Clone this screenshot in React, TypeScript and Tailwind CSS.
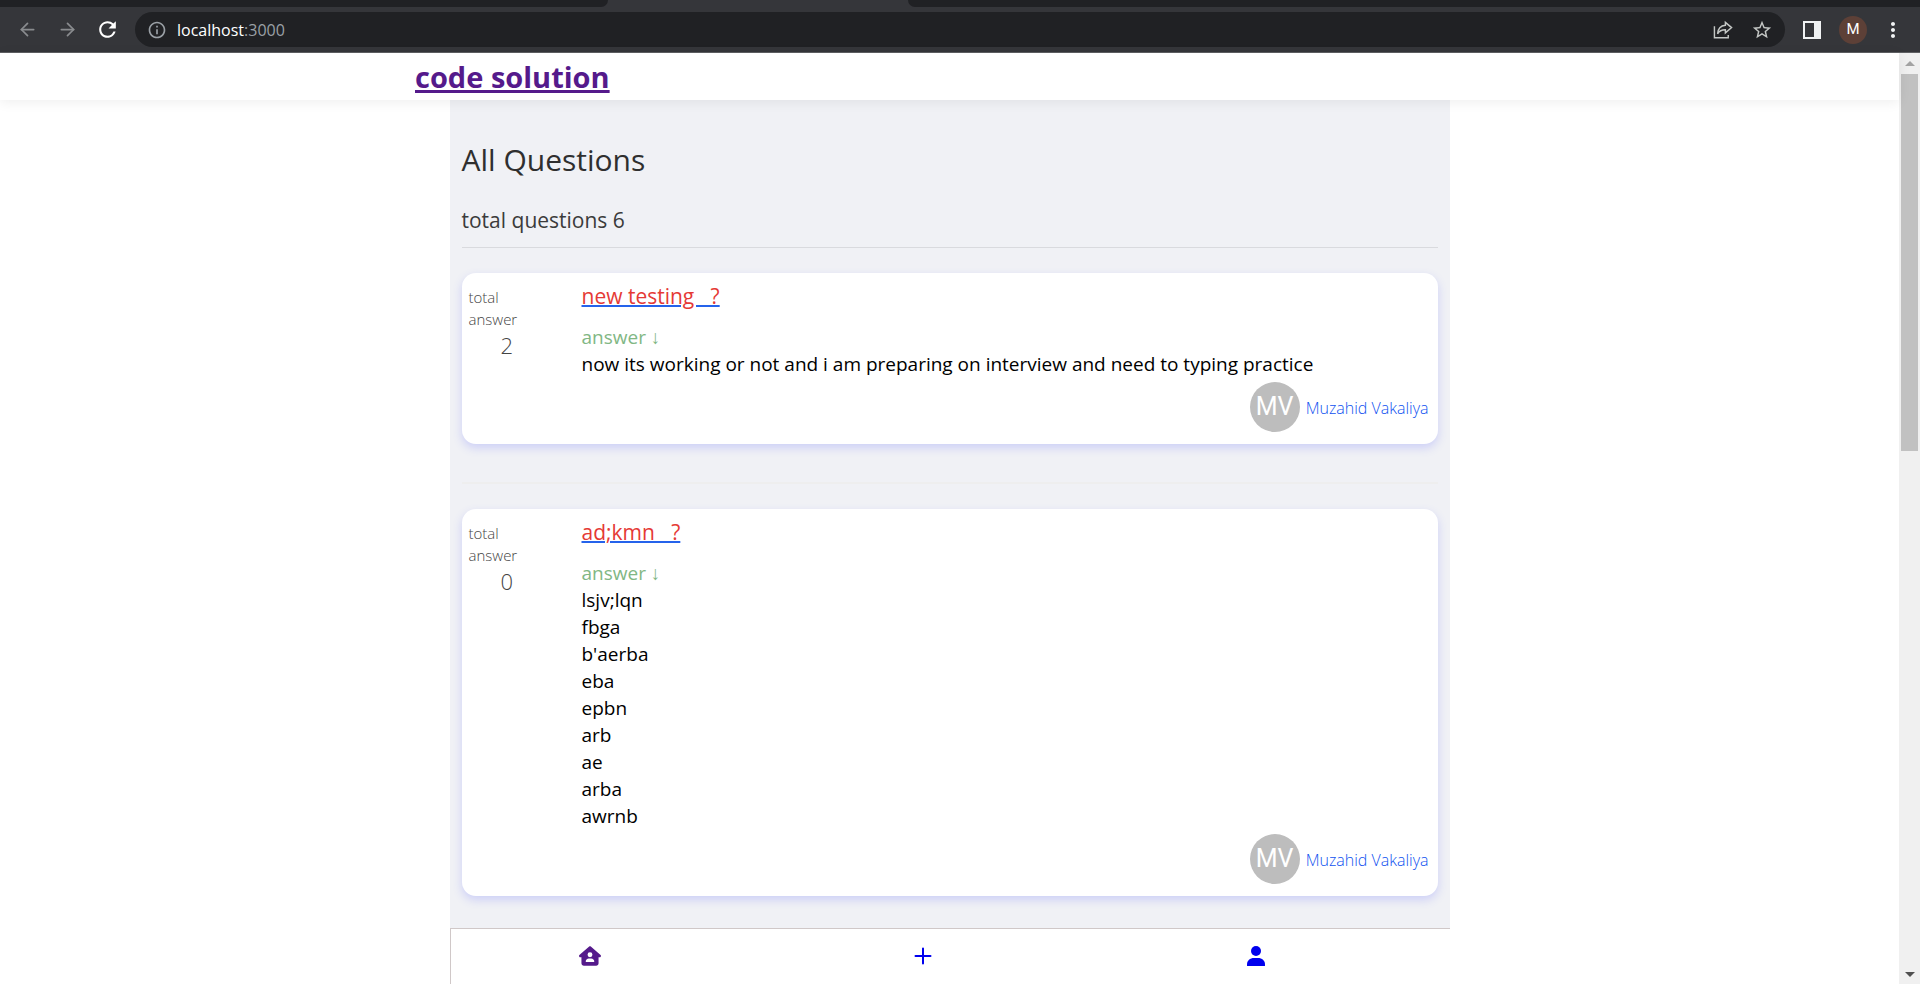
import { ArrowLeft, ArrowRight } from 'lucide-react';
import { MdRefresh, MdInfoOutline, MdStarOutline, MdMoreVert } from 'react-icons/md';
import { FaHouseUser } from 'react-icons/fa6';

type Question = { id: number; title: string; total: number; answer: string[]; author: string; initials: string };

const questions: Question[] = [
  {
    id: 1,
    title: 'new testing',
    total: 2,
    answer: ['now its working or not and i am preparing on interview and need to typing practice'],
    author: 'Muzahid Vakaliya',
    initials: 'MV',
  },
  {
    id: 2,
    title: 'ad;kmn',
    total: 0,
    answer: ['lsjv;lqn', 'fbga', "b'aerba", 'eba', 'epbn', 'arb', 'ae', 'arba', 'awrnb'],
    author: 'Muzahid Vakaliya',
    initials: 'MV',
  },
];

function BrowserBar() {
  return (
    <div className="shrink-0 border-b border-[#5f6063] bg-[#35363a]">
      <div className="flex h-[7px]">
        <div className="w-[608px] rounded-br-lg bg-[#202124]" />
        <div className="w-[300px]" />
        <div className="flex-1 rounded-bl-lg bg-[#202124]" />
      </div>
      <div className="flex h-[45px] items-center pl-[17px] pr-[15px]">
        <button aria-label="Back" className="text-[#898b8e]"><ArrowLeft size={21} strokeWidth={2} /></button>
        <button aria-label="Forward" className="ml-[19px] text-[#898b8e]"><ArrowRight size={21} strokeWidth={2} /></button>
        <button aria-label="Reload" className="ml-[17px] text-white"><MdRefresh size={25} /></button>
        <div className="ml-[15px] flex h-[35px] flex-1 items-center rounded-full bg-[#202124] pl-3 pr-3">
          <MdInfoOutline size={20} className="text-[#9aa0a6]" />
          <div className="ml-[10px] flex-1 text-[16px] leading-6 text-[#9aa0a6]"><span className="text-white">localhost</span>:3000</div>
          <button aria-label="Share" className="text-[#c4c7c5]">
            <svg width="20" height="20" viewBox="0 0 21 20" fill="none" stroke="currentColor" strokeWidth="1.5">
              <path d="M1.500 6v12.200h14.500v-3" />
              <path d="M13 2l6.500 5.500L13 13V9.800C9 9.800 6.500 11 4.800 14 5.200 8.500 8 5.500 13 5z" />
            </svg>
          </button>
          <button aria-label="Bookmark" className="ml-[18px] text-[#c4c7c5]"><MdStarOutline size={22} /></button>
        </div>
        <button aria-label="Side panel" className="ml-[18px] h-[18px] w-[18px] border-2 border-r-[7px] border-[#f1f3f4]" />
        <button aria-label="Profile" className="ml-[18px] flex size-7 items-center justify-center rounded-full bg-[#5d4037] font-['Roboto',sans-serif] text-[15px] text-white">M</button>
        <button aria-label="Menu" className="ml-[14px] text-[#f1f3f4]"><MdMoreVert size={24} /></button>
      </div>
    </div>
  );
}

function QuestionCard({ q }: { q: Question }) {
  return (
    <article className="flex rounded-[14px] bg-white px-[7px] pb-3 pt-2 shadow-[0_4px_10px_rgba(80,90,255,0.22)]">
      <div className="w-[113px] shrink-0 pt-[5px] text-[#444]">
        <p className="w-14 text-[15px] font-light leading-[22px]">total answer</p>
        <p className="pl-8 text-[22px] font-light leading-[30px]">{q.total}</p>
      </div>
      <div className="min-w-0 flex-1">
        <h2 className="text-[21px] leading-[30px]">
          <a href="#question" className="whitespace-pre text-[#e53935] underline decoration-[#2563eb] decoration-2">{q.title + '   ?'}</a>
        </h2>
        <p className="mt-[13px] text-[19px] leading-[27px] text-[#81b784]">answer ↓</p>
        {q.answer.map((line) => (
          <p key={line} className="text-[19px] leading-[27px] text-black">{line}</p>
        ))}
        <div className="flex items-center justify-end gap-[6px] pr-[2px] pt-1">
          <span className="flex size-[50px] items-center justify-center rounded-full bg-[#bdbdbd] font-['Roboto',sans-serif] text-[25px] text-white">{q.initials}</span>
          <a href="#author" className="pt-[2px] text-[16px] font-light text-[#0f52f0]">{q.author}</a>
        </div>
      </div>
    </article>
  );
}

function Scrollbar() {
  return (
    <div aria-hidden="true" className="flex w-[21px] shrink-0 flex-col items-center justify-between bg-[#f0f0f0] pb-[7px]">
      <div className="flex h-full w-full flex-col items-center">
        <div className="flex h-[21px] items-center"><div className="border-x-[5px] border-b-[5px] border-x-transparent border-b-[#a3a3a3]" /></div>
        <div className="h-[41%] w-[17px] bg-[#c1c1c1]" />
      </div>
      <div className="border-x-[5px] border-t-[5px] border-x-transparent border-t-[#505050]" />
    </div>
  );
}

export default function App() {
  return (
    <div className="flex h-screen flex-col overflow-hidden bg-white font-['Open_Sans',sans-serif]">
      <BrowserBar />
      <div className="flex min-h-0 flex-1">
        <div className="flex min-w-0 flex-1 flex-col">
          <header className="z-10 h-[47px] shrink-0 bg-white pl-[415px] shadow-[0_2px_12px_rgba(0,0,0,0.07)]">
            <a href="#home" className="text-[29px] font-bold leading-[48px] text-[#551a8b] underline decoration-[3px]">code solution</a>
          </header>
          <main className="mx-auto min-h-0 w-full max-w-[1000px] flex-1 overflow-hidden bg-[#f0f1f5] px-3 pt-9">
            <h1 className="text-[30px] leading-[48px] text-[#2f2f2f]">All Questions</h1>
            <p className="mt-[20px] text-[21px] leading-[32px] text-[#3b3b3b]">total questions 6</p>
            <hr className="mt-[11px] border-[#d9dade]" />
            <div className="mt-[25px]">
              {questions.map((q, i) => (
                <div key={q.id}>
                  {i > 0 && <hr className="mb-[25px] mt-[38px] border-t-2 border-[#eeeeee]" />}
                  <QuestionCard q={q} />
                </div>
              ))}
            </div>
          </main>
          <nav className="mx-auto grid h-14 w-full max-w-[1000px] shrink-0 grid-cols-3 border-l border-t border-[#d0c8c8] bg-white pb-[2px]">
            <a href="#home" aria-label="Home" className="flex items-center justify-center pr-[54px] text-[#551a8b]"><FaHouseUser size={22} /></a>
            <a href="#ask" aria-label="Ask" className="flex items-center justify-center pr-[54px] text-[#0000ee]">
              <svg width="18" height="18" viewBox="0 0 18 18" stroke="currentColor" strokeWidth="2" strokeLinecap="round"><path d="M9 1.500v15M1.500 9h15" /></svg>
            </a>
            <a href="#profile" aria-label="Profile" className="flex items-center justify-center pr-[54px] text-[#0000ee]">
              <svg width="18" height="22" viewBox="0 0 18 22" fill="currentColor"><circle cx="9" cy="6" r="5" /><path d="M0 19.500C0 15.500 3 13 7 13h4c4 0 7 2.500 7 6.500v1q0 .5-.5.5H.5q-.5 0-.5-.5z" /></svg>
            </a>
          </nav>
        </div>
        <Scrollbar />
      </div>
    </div>
  );
}
